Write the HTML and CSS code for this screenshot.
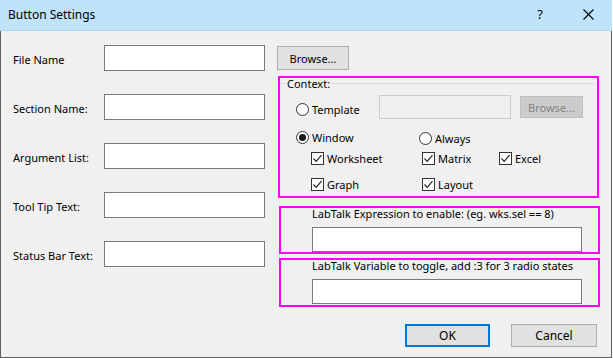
FILE: index.html
```html
<!DOCTYPE html>
<html lang="en">
<head>
    <meta charset="UTF-8">
    <title>Button Settings</title>
    <link rel="stylesheet" href="styles.css">
</head>
<body>
    <div class="window">
        <div class="titlebar">
            <div class="title">Button Settings</div>
            <div class="help">?</div>
            <div class="close">
                <svg width="11" height="11" viewBox="0 0 11 11"><path d="M0.5 0.5 L10.5 10.5 M10.5 0.5 L0.5 10.5" stroke="#000" stroke-width="1.1" fill="none"/></svg>
            </div>
        </div>

        <div class="content">
            <div class="fields">
                <div class="field"><span class="label">File Name</span><input class="text-input" type="text"></div>
                <div class="field"><span class="label">Section Name:</span><input class="text-input" type="text"></div>
                <div class="field"><span class="label">Argument List:</span><input class="text-input" type="text"></div>
                <div class="field"><span class="label">Tool Tip Text:</span><input class="text-input" type="text"></div>
                <div class="field"><span class="label">Status Bar Text:</span><input class="text-input" type="text"></div>
            </div>

            <div class="side">
                <button class="btn browse">Browse...</button>

                <div class="box context">
                    <div class="group-head">
                        <span class="group-line short"></span>
                        <span class="group-title">Context:</span>
                        <span class="group-line"></span>
                    </div>
                    <div class="row template-row">
                        <label class="radio wide"><span class="radio-dot"></span>Template</label>
                        <input class="text-input disabled" type="text" disabled>
                        <button class="btn browse-off" disabled>Browse...</button>
                    </div>
                    <div class="row window-row">
                        <label class="radio col-window"><span class="radio-dot on"></span>Window</label>
                        <label class="radio always"><span class="radio-dot"></span>Always</label>
                    </div>
                    <div class="row checks">
                        <label class="check col1"><span class="check-box"><svg width="11" height="11" viewBox="0 0 11 11"><path d="M1.5 5.5 L4.2 8.3 L9.5 2.2" stroke="#222" stroke-width="1.2" fill="none"/></svg></span>Worksheet</label>
                        <label class="check col2"><span class="check-box"><svg width="11" height="11" viewBox="0 0 11 11"><path d="M1.5 5.5 L4.2 8.3 L9.5 2.2" stroke="#222" stroke-width="1.2" fill="none"/></svg></span>Matrix</label>
                        <label class="check"><span class="check-box"><svg width="11" height="11" viewBox="0 0 11 11"><path d="M1.5 5.5 L4.2 8.3 L9.5 2.2" stroke="#222" stroke-width="1.2" fill="none"/></svg></span>Excel</label>
                    </div>
                    <div class="row checks second">
                        <label class="check col1"><span class="check-box"><svg width="11" height="11" viewBox="0 0 11 11"><path d="M1.5 5.5 L4.2 8.3 L9.5 2.2" stroke="#222" stroke-width="1.2" fill="none"/></svg></span>Graph</label>
                        <label class="check col2"><span class="check-box"><svg width="11" height="11" viewBox="0 0 11 11"><path d="M1.5 5.5 L4.2 8.3 L9.5 2.2" stroke="#222" stroke-width="1.2" fill="none"/></svg></span>Layout</label>
                    </div>
                </div>

                <div class="box labtalk expr">
                    <div class="box-text">LabTalk Expression to enable: (eg. wks.sel == 8)</div>
                    <input class="text-input long" type="text">
                </div>

                <div class="box labtalk var">
                    <div class="box-text">LabTalk Variable to toggle, add :3 for 3 radio states</div>
                    <input class="text-input long" type="text">
                </div>
            </div>
        </div>

        <div class="footer">
            <button class="btn ok">OK</button>
            <button class="btn cancel">Cancel</button>
        </div>
    </div>
</body>
</html>
```

FILE: styles.css
```css
body {
    margin: 0;
    background: #ffffff;
    font-family: "Noto Sans", "Open Sans", sans-serif;
    font-size: 11px;
    color: #000000;
}
.window {
    width: 612px;
    height: 358px;
    box-sizing: border-box;
    background: #f0f0f0;
    border: 1px solid #5f5f5f;
    border-top: none;
    display: flex;
    flex-direction: column;
}
.titlebar {
    height: 31px;
    flex: none;
    background: #bee4fb;
    border-bottom: 1px solid #a9d3ef;
    box-sizing: border-box;
    display: flex;
    align-items: center;
    margin: 0 -1px;
    font-size: 12px;
}
.title {
    padding-left: 8px;
    flex: 1;
    margin-top: -1px;
}
.help {
    width: 46px;
    text-align: center;
    font-size: 13px;
    margin-top: -2px;
    margin-right: 2px;
}
.close {
    width: 46px;
    display: flex;
    justify-content: center;
    margin-right: 1px;
    margin-top: -2px;
}
.content {
    display: flex;
}
.fields {
    width: 263px;
    padding: 14px 0 0 12px;
    display: flex;
    flex-direction: column;
    gap: 23px;
}
.field {
    display: flex;
    align-items: center;
    height: 26px;
}
.label {
    width: 91px;
    flex: none;
    margin-top: 2px;
}
.text-input {
    box-sizing: border-box;
    width: 161px;
    height: 26px;
    border: 1px solid #7a7a7a;
    background: #ffffff;
    margin: 0;
    padding: 0 4px;
    font: inherit;
}
.side {
    padding-top: 15px;
    display: flex;
    flex-direction: column;
    align-items: flex-start;
}
.btn {
    box-sizing: border-box;
    font: inherit;
    color: #000000;
    background: #e1e1e1;
    border: 1px solid #adadad;
    padding: 0;
    margin: 0;
}
.browse {
    width: 72px;
    height: 24px;
    margin-left: 1px;
}
.box {
    box-sizing: border-box;
    width: 321px;
    border: 2px solid #ff00ff;
}
.context {
    margin-top: 6px;
    margin-left: 2px;
    height: 122px;
}
.group-head {
    display: flex;
    align-items: center;
    height: 10px;
    padding-right: 2px;
}
.group-line {
    flex: 1;
    height: 1px;
    background: #dcdcdc;
}
.group-line.short {
    flex: none;
    width: 6px;
}
.group-title {
    padding: 0 1px;
}
.row {
    display: flex;
    align-items: center;
    padding-left: 16px;
}
.template-row {
    margin-top: 7px;
    height: 24px;
}
.radio, .check {
    display: flex;
    align-items: center;
    gap: 3px;
}
.radio.wide {
    width: 83px;
    margin-top: 4px;
}
.radio-dot {
    box-sizing: border-box;
    width: 13px;
    height: 13px;
    border: 1px solid #333333;
    border-radius: 50%;
    background: #ffffff;
    display: flex;
    align-items: center;
    justify-content: center;
}
.radio-dot.on::after {
    content: "";
    width: 7px;
    height: 7px;
    border-radius: 50%;
    background: #1a1a1a;
}
.disabled {
    width: 132px;
    height: 24px;
    background: #f0f0f0;
    border-color: #cccccc;
}
.browse-off {
    width: 63px;
    height: 22px;
    margin-left: 9px;
    background: #cccccc;
    border-color: #bfbfbf;
    color: #838383;
}
.window-row {
    margin-top: 10px;
    height: 16px;
}
.col-window {
    width: 123px;
}
.always {
    margin-top: 3px;
}
.checks {
    margin-top: 5px;
    height: 16px;
    padding-left: 31px;
}
.checks.second {
    margin-top: 10px;
}
.check.col1 {
    width: 111px;
}
.check.col2 {
    width: 77px;
}
.check-box {
    box-sizing: border-box;
    width: 13px;
    height: 13px;
    border: 1px solid #333333;
    background: #ffffff;
    display: flex;
    align-items: center;
    justify-content: center;
}
.labtalk {
    padding-left: 31px;
    margin-left: 3px;
}
.expr {
    margin-top: 8px;
    height: 48px;
}
.var {
    margin-top: 4px;
    height: 49px;
}
.box-text {
    line-height: 12px;
    margin-top: 0;
}
.text-input.long {
    width: 270px;
    height: 25px;
    margin-top: 7px;
}
.footer {
    display: flex;
    justify-content: flex-end;
    gap: 21px;
    padding: 17px 14px 0 0;
}
.ok, .cancel {
    width: 86px;
    height: 23px;
    font-size: 12px;
}
.ok {
    width: 85px;
    border: 2px solid #0078d7;
}
```
